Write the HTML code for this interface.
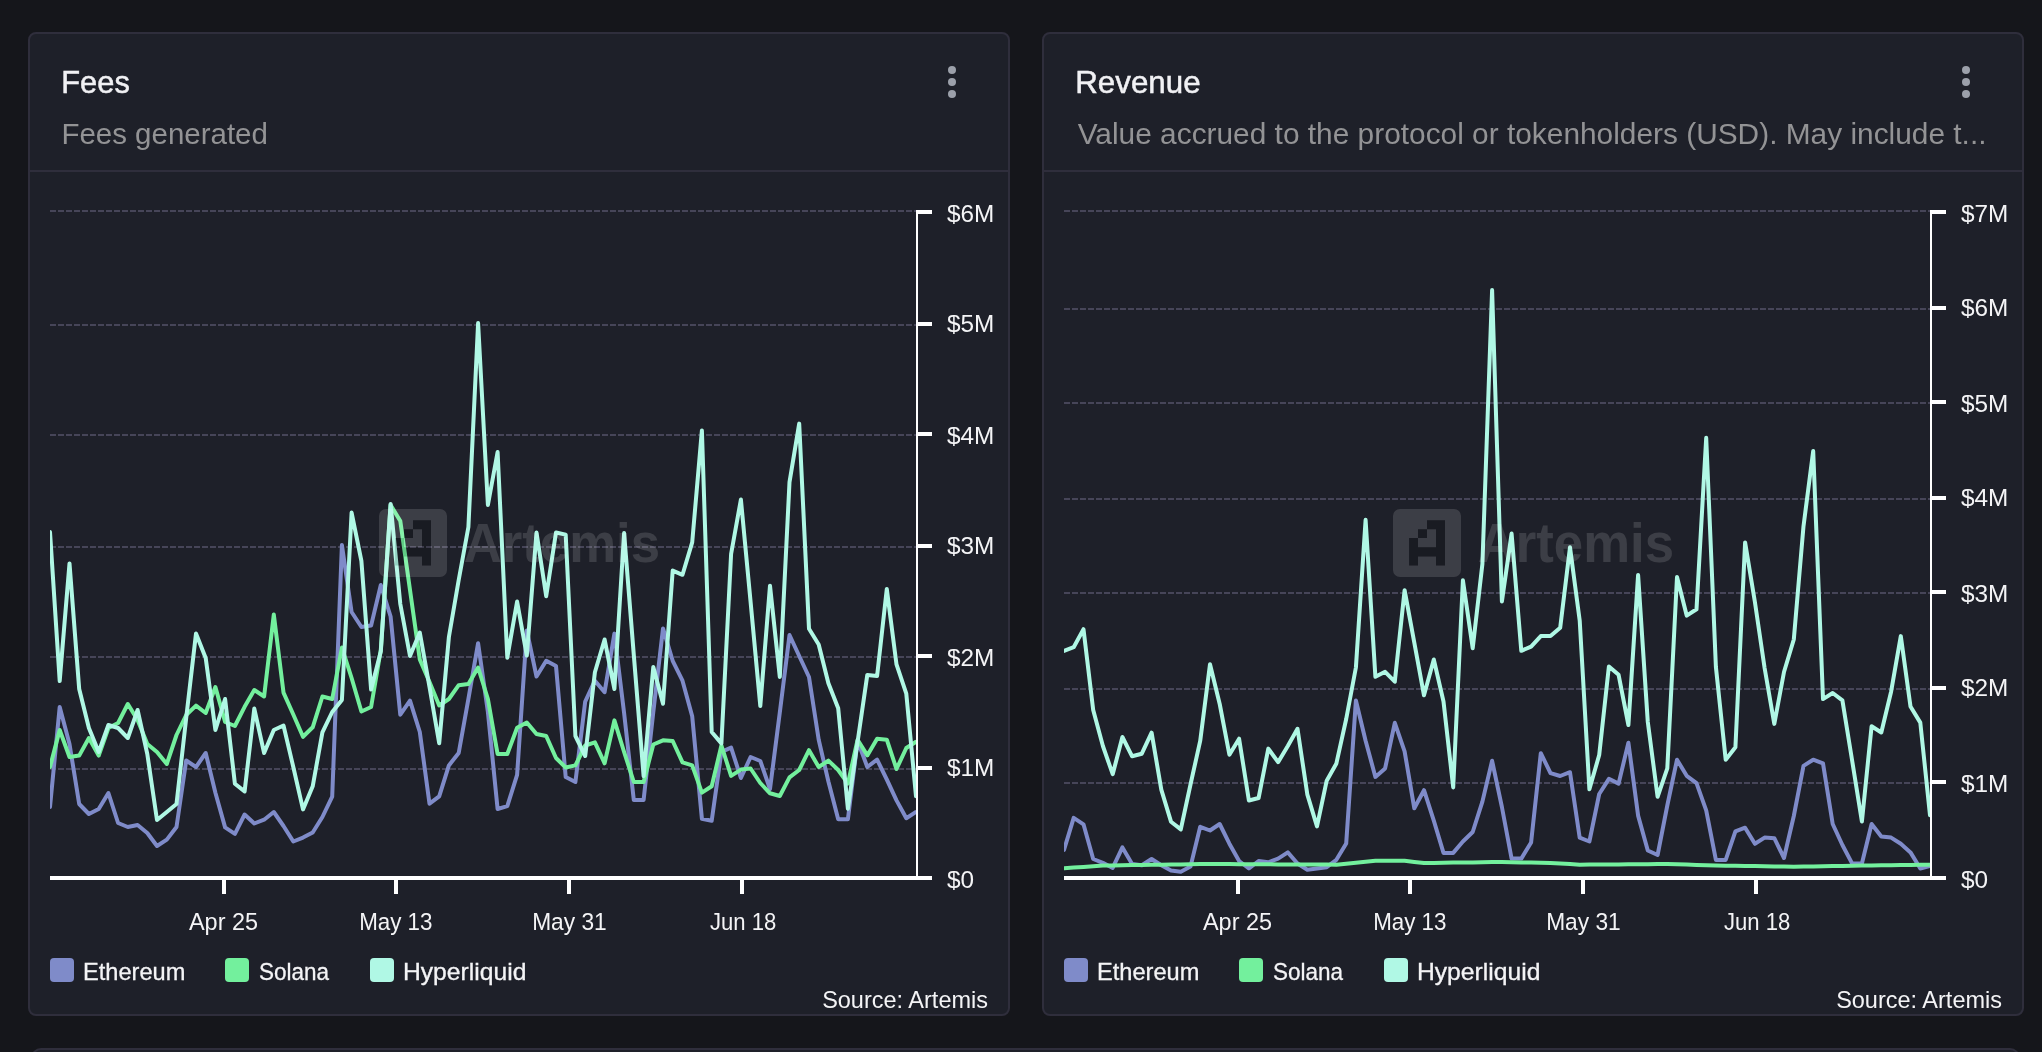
<!DOCTYPE html>
<html><head><meta charset="utf-8"><style>
html,body{margin:0;padding:0;}
body{width:2042px;height:1052px;background:#15161b;overflow:hidden;}
svg{display:block;will-change:transform;}
text{font-family:"Liberation Sans",sans-serif;}
</style></head><body>
<svg width="2042" height="1052" viewBox="0 0 2042 1052">
<rect width="2042" height="1052" fill="#15161b"/>
<g transform="translate(0,0)">
<rect x="29" y="33" width="980" height="982" rx="7" fill="#1e2029" stroke="#2f2e3c" stroke-width="2"/>
<rect x="30" y="170" width="978" height="2" fill="#2f2e3c"/>
<text x="61.27" y="93.10" font-size="32.27" textLength="68.54" lengthAdjust="spacingAndGlyphs" fill="#f1f1f4" stroke="#f1f1f4" stroke-width="0.5">Fees</text>
<text x="61.38" y="144.10" font-size="30.09" textLength="206.52" lengthAdjust="spacingAndGlyphs" fill="#939395" >Fees generated</text>
<circle cx="952" cy="70" r="4" fill="#9ca0aa"/>
<circle cx="952" cy="82" r="4" fill="#9ca0aa"/>
<circle cx="952" cy="94" r="4" fill="#9ca0aa"/>
<line x1="50" y1="211" x2="916" y2="211" stroke="#464558" stroke-width="2" stroke-dasharray="6 2"/>
<line x1="50" y1="325" x2="916" y2="325" stroke="#464558" stroke-width="2" stroke-dasharray="6 2"/>
<line x1="50" y1="435" x2="916" y2="435" stroke="#464558" stroke-width="2" stroke-dasharray="6 2"/>
<line x1="50" y1="547" x2="916" y2="547" stroke="#464558" stroke-width="2" stroke-dasharray="6 2"/>
<line x1="50" y1="657" x2="916" y2="657" stroke="#464558" stroke-width="2" stroke-dasharray="6 2"/>
<line x1="50" y1="769" x2="916" y2="769" stroke="#464558" stroke-width="2" stroke-dasharray="6 2"/>
<clipPath id="clip28"><rect x="50" y="150" width="866" height="728"/></clipPath>
<g clip-path="url(#clip28)">
<polyline points="50.0,807.0 59.7,707.0 69.5,744.0 79.2,804.0 88.9,814.0 98.7,809.0 108.4,793.0 118.1,823.0 127.8,827.0 137.6,825.0 147.3,833.0 157.0,846.0 166.8,839.6 176.5,827.0 186.2,760.5 196.0,767.0 205.7,753.0 215.4,792.7 225.1,827.4 234.9,833.8 244.6,814.5 254.3,823.5 264.1,819.7 273.8,812.0 283.5,826.0 293.3,841.5 303.0,837.6 312.7,832.5 322.4,817.0 332.2,796.6 341.9,545.0 351.6,612.0 361.4,627.0 371.1,625.6 380.8,585.0 390.6,616.5 400.3,714.7 410.0,700.6 419.8,732.0 429.5,803.7 439.2,796.3 448.9,765.4 458.7,753.0 468.4,698.8 478.1,643.2 487.9,712.0 497.6,809.0 507.3,806.2 517.1,774.8 526.8,630.5 536.5,676.5 546.2,660.8 556.0,666.0 565.7,777.0 575.4,782.0 585.2,701.6 594.9,680.7 604.6,692.2 614.4,633.6 624.1,713.0 633.8,800.0 643.6,800.0 653.3,712.0 663.0,628.4 672.7,660.8 682.5,680.7 692.2,716.2 701.9,818.7 711.7,820.8 721.4,751.8 731.1,747.6 740.9,778.0 750.6,757.0 760.3,761.0 770.0,789.0 779.8,712.5 789.5,635.0 799.2,656.0 809.0,677.0 818.7,739.7 828.4,781.5 838.2,819.2 847.9,819.2 857.6,740.8 867.3,767.0 877.1,759.6 886.8,779.5 896.5,800.4 906.3,818.2 916.0,812.0" fill="none" stroke="#7f8bc9" stroke-width="4" stroke-linejoin="round" stroke-linecap="round"/>
<polyline points="50.0,767.0 59.7,730.0 69.5,757.0 79.2,755.6 88.9,738.0 98.7,755.6 108.4,728.0 118.1,723.0 127.8,704.0 137.6,720.0 147.3,744.0 157.0,752.0 166.8,764.0 176.5,735.0 186.2,715.0 196.0,705.6 205.7,713.0 215.4,687.0 225.1,722.0 234.9,726.0 244.6,706.8 254.3,690.0 264.1,696.5 273.8,614.4 283.5,692.6 293.3,714.5 303.0,736.8 312.7,727.3 322.4,696.5 332.2,699.0 341.9,647.5 351.6,678.0 361.4,711.5 371.1,707.0 380.8,650.0 390.6,505.0 400.3,521.0 410.0,590.0 419.8,659.5 429.5,682.0 439.2,705.5 448.9,699.0 458.7,685.2 468.4,684.0 478.1,667.5 487.9,699.0 497.6,754.0 507.3,754.0 517.1,727.7 526.8,722.5 536.5,734.0 546.2,736.0 556.0,758.0 565.7,767.5 575.4,765.4 585.2,745.5 594.9,742.4 604.6,763.3 614.4,720.4 624.1,752.0 633.8,782.0 643.6,782.0 653.3,744.5 663.0,740.3 672.7,741.0 682.5,762.3 692.2,765.4 701.9,792.6 711.7,786.3 721.4,745.5 731.1,775.9 740.9,769.6 750.6,768.5 760.3,783.0 770.0,793.3 779.8,796.0 789.5,777.4 799.2,770.0 809.0,750.2 818.7,767.0 828.4,760.6 838.2,770.0 847.9,783.6 857.6,739.7 867.3,755.4 877.1,738.7 886.8,739.7 896.5,769.0 906.3,748.0 916.0,741.8" fill="none" stroke="#73f09d" stroke-width="4" stroke-linejoin="round" stroke-linecap="round"/>
<polyline points="50.0,532.0 59.7,681.0 69.5,563.5 79.2,689.0 88.9,728.0 98.7,752.0 108.4,725.0 118.1,728.0 127.8,738.0 137.6,710.0 147.3,754.0 157.0,820.0 166.8,812.0 176.5,804.0 186.2,718.0 196.0,633.6 205.7,658.0 215.4,730.0 225.1,699.0 234.9,783.7 244.6,791.4 254.3,708.6 264.1,753.0 273.8,730.0 283.5,725.5 293.3,767.0 303.0,809.4 312.7,786.3 322.4,732.4 332.2,712.0 341.9,700.0 351.6,512.6 361.4,561.0 371.1,689.5 380.8,651.5 390.6,504.0 400.3,604.0 410.0,656.0 419.8,632.5 429.5,687.0 439.2,743.2 448.9,637.0 458.7,580.0 468.4,527.0 478.1,323.0 487.9,505.0 497.6,452.0 507.3,657.7 517.1,601.5 526.8,655.6 536.5,532.5 546.2,596.3 556.0,532.5 565.7,534.6 575.4,736.0 585.2,756.0 594.9,672.3 604.6,639.5 614.4,689.0 624.1,533.0 633.8,655.0 643.6,776.0 653.3,667.0 663.0,703.7 672.7,570.6 682.5,574.8 692.2,542.4 701.9,430.5 711.7,732.0 721.4,743.4 731.1,554.0 740.9,499.5 750.6,602.0 760.3,706.0 770.0,585.7 779.8,677.0 789.5,482.2 799.2,423.6 809.0,628.8 818.7,644.5 828.4,683.2 838.2,708.3 847.9,808.7 857.6,741.8 867.3,674.9 877.1,676.0 886.8,588.9 896.5,664.4 906.3,693.7 916.0,796.2" fill="none" stroke="#b0f8e5" stroke-width="4" stroke-linejoin="round" stroke-linecap="round"/>
</g>
<path d="M386 509H440A7 7 0 0 1 447 516V570A7 7 0 0 1 440 577H386A7 7 0 0 1 379 570V516A7 7 0 0 1 386 509ZM413 520.2H422V529.2H413ZM422 520.2H431V529.2H422ZM404 529.2H413V538.1H404ZM422 529.2H431V538.1H422ZM395.1 538.1H404V547.3H395.1ZM422 538.1H431V547.3H422ZM395.1 547.3H404V556.4H395.1ZM404 547.3H413V556.4H404ZM413 547.3H422V556.4H413ZM422 547.3H431V556.4H422ZM395.1 556.4H404V565.6H395.1ZM422 556.4H431V565.6H422Z" fill="#ffffff" fill-opacity="0.138" fill-rule="evenodd"/>
<path d="M413 520.2H422V529.2H413ZM422 520.2H431V529.2H422ZM404 529.2H413V538.1H404ZM422 529.2H431V538.1H422ZM395.1 538.1H404V547.3H395.1ZM422 538.1H431V547.3H422ZM395.1 547.3H404V556.4H395.1ZM404 547.3H413V556.4H404ZM413 547.3H422V556.4H413ZM422 547.3H431V556.4H422ZM395.1 556.4H404V565.6H395.1ZM422 556.4H431V565.6H422Z" fill="#000000" fill-opacity="0.15"/>
<text x="463.69" y="562.30" font-size="54.65" font-weight="bold" textLength="196.27" lengthAdjust="spacingAndGlyphs" fill="#ffffff" fill-opacity="0.138">Artemis</text>
<rect x="916" y="210" width="2" height="668" fill="#fff"/>
<rect x="50" y="876" width="882" height="4" fill="#fff"/>
<rect x="916" y="210" width="16" height="4" fill="#fff"/>
<rect x="916" y="322" width="16" height="4" fill="#fff"/>
<rect x="916" y="432" width="16" height="4" fill="#fff"/>
<rect x="916" y="544" width="16" height="4" fill="#fff"/>
<rect x="916" y="654" width="16" height="4" fill="#fff"/>
<rect x="916" y="766" width="16" height="4" fill="#fff"/>
<rect x="222" y="878" width="4" height="16" fill="#fff"/>
<text x="188.95" y="929.90" font-size="23.11" textLength="69.13" lengthAdjust="spacingAndGlyphs" fill="#f4f4f6" >Apr 25</text>
<rect x="394" y="878" width="4" height="16" fill="#fff"/>
<text x="359.17" y="929.90" font-size="23.11" textLength="73.32" lengthAdjust="spacingAndGlyphs" fill="#f4f4f6" >May 13</text>
<rect x="567" y="878" width="4" height="16" fill="#fff"/>
<text x="532.13" y="929.90" font-size="23.11" textLength="74.58" lengthAdjust="spacingAndGlyphs" fill="#f4f4f6" >May 31</text>
<rect x="740" y="878" width="4" height="16" fill="#fff"/>
<text x="709.95" y="929.90" font-size="23.11" textLength="66.30" lengthAdjust="spacingAndGlyphs" fill="#f4f4f6" >Jun 18</text>
<text x="946.94" y="222.00" font-size="23.26" textLength="47.37" lengthAdjust="spacingAndGlyphs" fill="#f4f4f6" >$6M</text>
<text x="946.94" y="332.00" font-size="23.26" textLength="47.37" lengthAdjust="spacingAndGlyphs" fill="#f4f4f6" >$5M</text>
<text x="946.94" y="444.00" font-size="23.26" textLength="47.37" lengthAdjust="spacingAndGlyphs" fill="#f4f4f6" >$4M</text>
<text x="946.94" y="554.00" font-size="23.26" textLength="47.37" lengthAdjust="spacingAndGlyphs" fill="#f4f4f6" >$3M</text>
<text x="946.94" y="666.00" font-size="23.26" textLength="47.37" lengthAdjust="spacingAndGlyphs" fill="#f4f4f6" >$2M</text>
<text x="946.94" y="776.00" font-size="23.26" textLength="47.37" lengthAdjust="spacingAndGlyphs" fill="#f4f4f6" >$1M</text>
<text x="946.94" y="888.00" font-size="23.26" textLength="27.08" lengthAdjust="spacingAndGlyphs" fill="#f4f4f6" >$0</text>
<rect x="50" y="958" width="24" height="24" rx="4" fill="#7f8bc9"/>
<text x="83.06" y="980.20" font-size="23.84" textLength="102.29" lengthAdjust="spacingAndGlyphs" fill="#f4f4f6" stroke="#f4f4f6" stroke-width="0.3">Ethereum</text>
<rect x="225" y="958" width="24" height="24" rx="4" fill="#73f09d"/>
<text x="258.98" y="980.20" font-size="23.84" textLength="70.02" lengthAdjust="spacingAndGlyphs" fill="#f4f4f6" stroke="#f4f4f6" stroke-width="0.3">Solana</text>
<rect x="370" y="958" width="24" height="24" rx="4" fill="#b0f8e5"/>
<text x="402.98" y="980.20" font-size="23.84" textLength="123.41" lengthAdjust="spacingAndGlyphs" fill="#f4f4f6" stroke="#f4f4f6" stroke-width="0.3">Hyperliquid</text>
<text x="822.14" y="1008.20" font-size="23.84" textLength="165.90" lengthAdjust="spacingAndGlyphs" fill="#f4f4f6" >Source: Artemis</text>
</g>
<g transform="translate(1014,0)">
<rect x="29" y="33" width="980" height="982" rx="7" fill="#1e2029" stroke="#2f2e3c" stroke-width="2"/>
<rect x="30" y="170" width="978" height="2" fill="#2f2e3c"/>
<text x="61.23" y="93.10" font-size="32.27" textLength="125.36" lengthAdjust="spacingAndGlyphs" fill="#f1f1f4" stroke="#f1f1f4" stroke-width="0.5">Revenue</text>
<text x="63.67" y="144.10" font-size="30.09" textLength="908.85" lengthAdjust="spacingAndGlyphs" fill="#939395" >Value accrued to the protocol or tokenholders (USD). May include t...</text>
<circle cx="952" cy="70" r="4" fill="#9ca0aa"/>
<circle cx="952" cy="82" r="4" fill="#9ca0aa"/>
<circle cx="952" cy="94" r="4" fill="#9ca0aa"/>
<line x1="50" y1="211" x2="916" y2="211" stroke="#464558" stroke-width="2" stroke-dasharray="6 2"/>
<line x1="50" y1="309" x2="916" y2="309" stroke="#464558" stroke-width="2" stroke-dasharray="6 2"/>
<line x1="50" y1="403" x2="916" y2="403" stroke="#464558" stroke-width="2" stroke-dasharray="6 2"/>
<line x1="50" y1="499" x2="916" y2="499" stroke="#464558" stroke-width="2" stroke-dasharray="6 2"/>
<line x1="50" y1="593" x2="916" y2="593" stroke="#464558" stroke-width="2" stroke-dasharray="6 2"/>
<line x1="50" y1="689" x2="916" y2="689" stroke="#464558" stroke-width="2" stroke-dasharray="6 2"/>
<line x1="50" y1="783" x2="916" y2="783" stroke="#464558" stroke-width="2" stroke-dasharray="6 2"/>
<clipPath id="clip1042"><rect x="50" y="150" width="866" height="728"/></clipPath>
<g clip-path="url(#clip1042)">
<polyline points="50.0,850.0 59.7,817.9 69.5,824.3 79.2,859.0 88.9,862.8 98.7,867.9 108.4,847.4 118.1,864.0 127.8,865.3 137.6,859.0 147.3,865.3 157.0,870.5 166.8,871.7 176.5,866.6 186.2,826.8 196.0,830.5 205.7,824.0 215.4,843.7 225.1,861.0 234.9,868.5 244.6,861.0 254.3,862.3 264.1,858.6 273.8,852.4 283.5,863.5 293.3,869.7 303.0,868.5 312.7,867.2 322.4,859.8 332.2,843.5 341.9,700.5 351.6,740.8 361.4,776.9 371.1,768.4 380.8,722.8 390.6,751.3 400.3,808.3 410.0,790.2 419.8,820.6 429.5,852.9 439.2,852.9 448.9,841.5 458.7,832.0 468.4,801.6 478.1,760.8 487.9,807.0 497.6,858.6 507.3,858.6 517.1,842.5 526.8,753.2 536.5,773.1 546.2,776.0 556.0,772.2 565.7,837.7 575.4,841.5 585.2,794.0 594.9,778.8 604.6,783.6 614.4,742.7 624.1,815.6 633.8,850.5 643.6,855.0 653.3,805.5 663.0,759.7 672.7,775.8 682.5,783.2 692.2,810.4 701.9,859.9 711.7,859.9 721.4,831.4 731.1,827.7 740.9,843.8 750.6,837.6 760.3,838.2 770.0,858.0 779.8,816.0 789.5,765.9 799.2,759.7 809.0,763.4 818.7,824.0 828.4,845.0 838.2,863.6 847.9,863.6 857.6,824.0 867.3,836.4 877.1,837.6 886.8,843.8 896.5,852.4 906.3,868.5 916.0,866.0" fill="none" stroke="#7f8bc9" stroke-width="4" stroke-linejoin="round" stroke-linecap="round"/>
<polyline points="50.0,868.3 59.7,867.6 69.5,866.9 79.2,866.2 88.9,865.5 98.7,865.4 108.4,865.2 118.1,865.1 127.8,865.0 137.6,864.8 147.3,864.7 157.0,864.5 166.8,864.4 176.5,864.3 186.2,864.1 196.0,864.0 205.7,864.1 215.4,864.1 225.1,864.2 234.9,864.2 244.6,864.3 254.3,864.3 264.1,864.4 273.8,864.4 283.5,864.5 293.3,864.5 303.0,864.6 312.7,864.6 322.4,864.7 332.2,863.7 341.9,862.8 351.6,861.8 361.4,860.8 371.1,860.8 380.8,860.8 390.6,860.8 400.3,861.9 410.0,863.0 419.8,862.9 429.5,862.8 439.2,862.6 448.9,862.5 458.7,862.4 468.4,862.2 478.1,862.1 487.9,862.0 497.6,862.2 507.3,862.4 517.1,862.6 526.8,862.8 536.5,863.0 546.2,863.6 556.0,864.1 565.7,864.7 575.4,864.6 585.2,864.5 594.9,864.5 604.6,864.4 614.4,864.3 624.1,864.2 633.8,864.2 643.6,864.1 653.3,864.0 663.0,864.3 672.7,864.6 682.5,864.9 692.2,865.2 701.9,865.5 711.7,865.7 721.4,865.8 731.1,866.0 740.9,866.1 750.6,866.3 760.3,866.5 770.0,866.6 779.8,866.8 789.5,866.6 799.2,866.4 809.0,866.2 818.7,866.1 828.4,865.9 838.2,865.7 847.9,865.5 857.6,865.4 867.3,865.3 877.1,865.2 886.8,865.0 896.5,864.9 906.3,864.8 916.0,864.7" fill="none" stroke="#73f09d" stroke-width="4" stroke-linejoin="round" stroke-linecap="round"/>
<polyline points="50.0,651.0 59.7,647.2 69.5,629.2 79.2,710.0 88.9,746.0 98.7,774.2 108.4,737.0 118.1,756.3 127.8,753.7 137.6,732.7 147.3,789.6 157.0,821.7 166.8,829.4 176.5,784.5 186.2,740.9 196.0,664.2 205.7,704.0 215.4,754.7 225.1,738.7 234.9,800.5 244.6,798.0 254.3,748.6 264.1,762.2 273.8,746.0 283.5,728.8 293.3,794.3 303.0,826.4 312.7,780.7 322.4,763.4 332.2,719.0 341.9,667.5 351.6,519.8 361.4,676.8 371.1,671.8 380.8,681.7 390.6,590.2 400.3,642.7 410.0,695.3 419.8,659.5 429.5,701.5 439.2,787.4 448.9,580.3 458.7,648.3 468.4,564.0 478.1,290.0 487.9,601.5 497.6,533.6 507.3,650.8 517.1,646.6 526.8,636.1 536.5,636.1 546.2,627.7 556.0,547.2 565.7,620.4 575.4,789.3 585.2,755.0 594.9,666.4 604.6,674.8 614.4,725.0 624.1,575.0 633.8,722.0 643.6,796.8 653.3,768.4 663.0,577.0 672.7,615.6 682.5,609.3 692.2,437.8 701.9,667.0 711.7,759.7 721.4,747.3 731.1,542.4 740.9,602.0 750.6,668.0 760.3,723.9 770.0,672.0 779.8,639.5 789.5,526.2 799.2,451.0 809.0,699.1 818.7,693.0 828.4,700.4 838.2,761.0 847.9,821.5 857.6,726.3 867.3,732.5 877.1,691.7 886.8,636.1 896.5,706.5 906.3,722.6 916.0,815.3" fill="none" stroke="#b0f8e5" stroke-width="4" stroke-linejoin="round" stroke-linecap="round"/>
</g>
<path d="M386 509H440A7 7 0 0 1 447 516V570A7 7 0 0 1 440 577H386A7 7 0 0 1 379 570V516A7 7 0 0 1 386 509ZM413 520.2H422V529.2H413ZM422 520.2H431V529.2H422ZM404 529.2H413V538.1H404ZM422 529.2H431V538.1H422ZM395.1 538.1H404V547.3H395.1ZM422 538.1H431V547.3H422ZM395.1 547.3H404V556.4H395.1ZM404 547.3H413V556.4H404ZM413 547.3H422V556.4H413ZM422 547.3H431V556.4H422ZM395.1 556.4H404V565.6H395.1ZM422 556.4H431V565.6H422Z" fill="#ffffff" fill-opacity="0.138" fill-rule="evenodd"/>
<path d="M413 520.2H422V529.2H413ZM422 520.2H431V529.2H422ZM404 529.2H413V538.1H404ZM422 529.2H431V538.1H422ZM395.1 538.1H404V547.3H395.1ZM422 538.1H431V547.3H422ZM395.1 547.3H404V556.4H395.1ZM404 547.3H413V556.4H404ZM413 547.3H422V556.4H413ZM422 547.3H431V556.4H422ZM395.1 556.4H404V565.6H395.1ZM422 556.4H431V565.6H422Z" fill="#000000" fill-opacity="0.15"/>
<text x="463.69" y="562.30" font-size="54.65" font-weight="bold" textLength="196.27" lengthAdjust="spacingAndGlyphs" fill="#ffffff" fill-opacity="0.138">Artemis</text>
<rect x="916" y="210" width="2" height="668" fill="#fff"/>
<rect x="50" y="876" width="882" height="4" fill="#fff"/>
<rect x="916" y="210" width="16" height="4" fill="#fff"/>
<rect x="916" y="306" width="16" height="4" fill="#fff"/>
<rect x="916" y="400" width="16" height="4" fill="#fff"/>
<rect x="916" y="496" width="16" height="4" fill="#fff"/>
<rect x="916" y="590" width="16" height="4" fill="#fff"/>
<rect x="916" y="686" width="16" height="4" fill="#fff"/>
<rect x="916" y="780" width="16" height="4" fill="#fff"/>
<rect x="222" y="878" width="4" height="16" fill="#fff"/>
<text x="188.95" y="929.90" font-size="23.11" textLength="69.13" lengthAdjust="spacingAndGlyphs" fill="#f4f4f6" >Apr 25</text>
<rect x="394" y="878" width="4" height="16" fill="#fff"/>
<text x="359.17" y="929.90" font-size="23.11" textLength="73.32" lengthAdjust="spacingAndGlyphs" fill="#f4f4f6" >May 13</text>
<rect x="567" y="878" width="4" height="16" fill="#fff"/>
<text x="532.13" y="929.90" font-size="23.11" textLength="74.58" lengthAdjust="spacingAndGlyphs" fill="#f4f4f6" >May 31</text>
<rect x="740" y="878" width="4" height="16" fill="#fff"/>
<text x="709.95" y="929.90" font-size="23.11" textLength="66.30" lengthAdjust="spacingAndGlyphs" fill="#f4f4f6" >Jun 18</text>
<text x="946.94" y="222.00" font-size="23.26" textLength="47.37" lengthAdjust="spacingAndGlyphs" fill="#f4f4f6" >$7M</text>
<text x="946.94" y="316.00" font-size="23.26" textLength="47.37" lengthAdjust="spacingAndGlyphs" fill="#f4f4f6" >$6M</text>
<text x="946.94" y="412.00" font-size="23.26" textLength="47.37" lengthAdjust="spacingAndGlyphs" fill="#f4f4f6" >$5M</text>
<text x="946.94" y="506.00" font-size="23.26" textLength="47.37" lengthAdjust="spacingAndGlyphs" fill="#f4f4f6" >$4M</text>
<text x="946.94" y="602.00" font-size="23.26" textLength="47.37" lengthAdjust="spacingAndGlyphs" fill="#f4f4f6" >$3M</text>
<text x="946.94" y="696.00" font-size="23.26" textLength="47.37" lengthAdjust="spacingAndGlyphs" fill="#f4f4f6" >$2M</text>
<text x="946.94" y="792.00" font-size="23.26" textLength="47.37" lengthAdjust="spacingAndGlyphs" fill="#f4f4f6" >$1M</text>
<text x="946.94" y="888.00" font-size="23.26" textLength="27.08" lengthAdjust="spacingAndGlyphs" fill="#f4f4f6" >$0</text>
<rect x="50" y="958" width="24" height="24" rx="4" fill="#7f8bc9"/>
<text x="83.06" y="980.20" font-size="23.84" textLength="102.29" lengthAdjust="spacingAndGlyphs" fill="#f4f4f6" stroke="#f4f4f6" stroke-width="0.3">Ethereum</text>
<rect x="225" y="958" width="24" height="24" rx="4" fill="#73f09d"/>
<text x="258.98" y="980.20" font-size="23.84" textLength="70.02" lengthAdjust="spacingAndGlyphs" fill="#f4f4f6" stroke="#f4f4f6" stroke-width="0.3">Solana</text>
<rect x="370" y="958" width="24" height="24" rx="4" fill="#b0f8e5"/>
<text x="402.98" y="980.20" font-size="23.84" textLength="123.41" lengthAdjust="spacingAndGlyphs" fill="#f4f4f6" stroke="#f4f4f6" stroke-width="0.3">Hyperliquid</text>
<text x="822.14" y="1008.20" font-size="23.84" textLength="165.90" lengthAdjust="spacingAndGlyphs" fill="#f4f4f6" >Source: Artemis</text>
</g>
<rect x="32" y="1049" width="1987" height="200" rx="9" fill="#1e2029" stroke="#2f2e3c" stroke-width="2"/>
</svg>
</body></html>
